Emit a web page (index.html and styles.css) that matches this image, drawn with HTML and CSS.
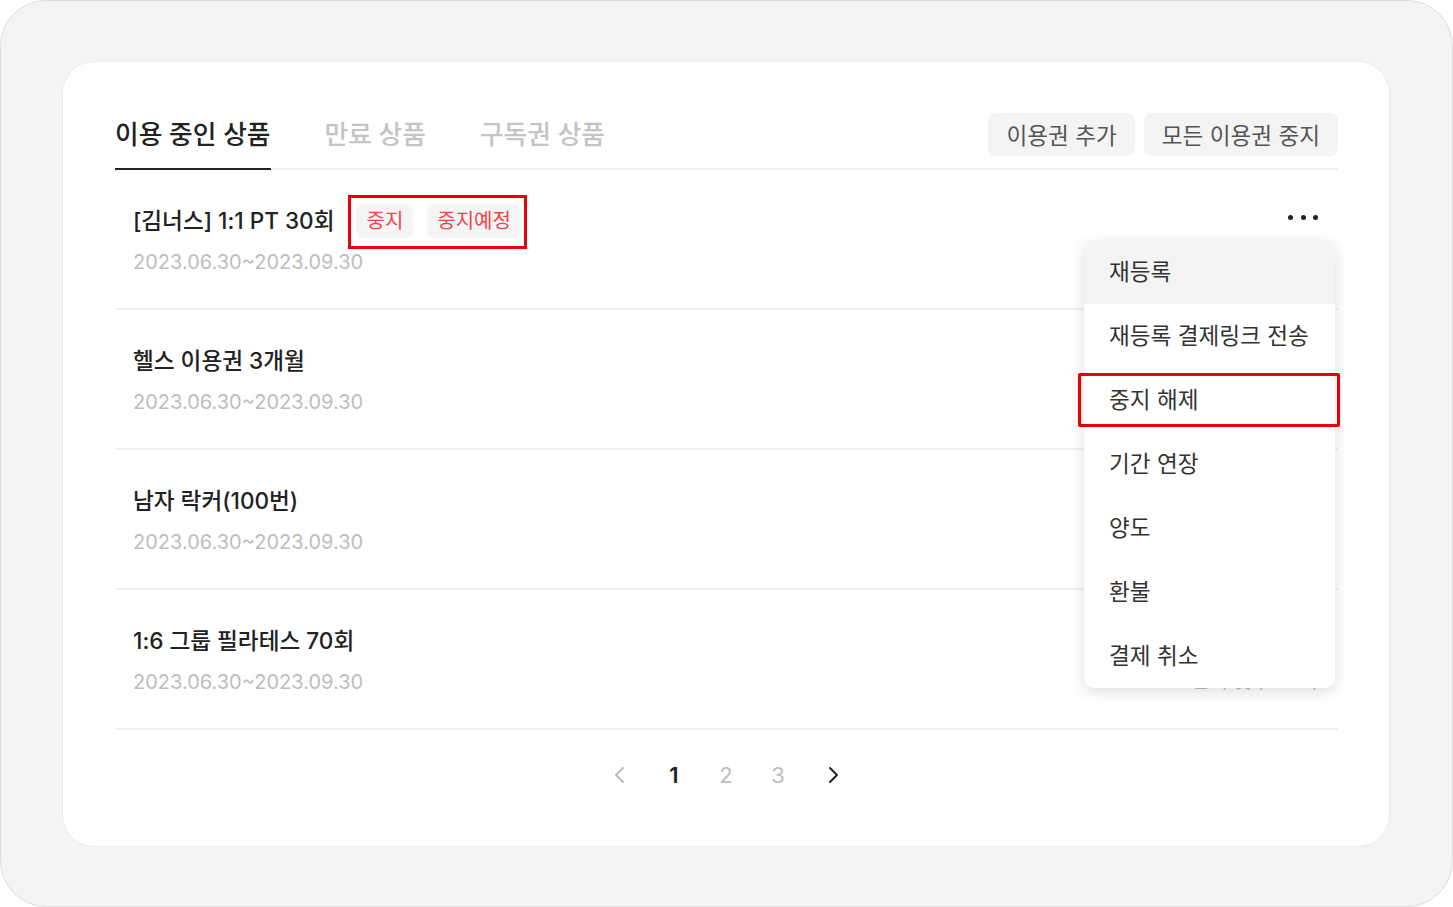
FILE: index.html
```html
<!DOCTYPE html>
<html lang="ko">
<head>
<meta charset="utf-8">
<title>이용 중인 상품</title>
<link rel="stylesheet" href="styles.css">
</head>
<body>
<div class="frame">
  <div class="card">
    <div class="header">
      <div class="tabs">
        <div class="tab active">이용 중인 상품</div>
        <div class="tab">만료 상품</div>
        <div class="tab">구독권 상품</div>
      </div>
      <div class="actions">
        <button class="btn">이용권 추가</button>
        <button class="btn">모든 이용권 중지</button>
      </div>
    </div>

    <div class="row">
      <div class="row-main">
        <div class="title-line">
          <span class="title">[김너스] 1:1 PT 30회</span>
          <span class="badge-group">
            <span class="badge">중지</span>
            <span class="badge">중지예정</span>
          </span>
        </div>
        <div class="date">2023.06.30~2023.09.30</div>
      </div>
      <div class="row-side">
        <div class="more"><span></span><span></span><span></span></div>
        <div class="side-text">남은 기간 92일</div>
      </div>
    </div>

    <div class="row">
      <div class="row-main">
        <div class="title-line"><span class="title">헬스 이용권 3개월</span></div>
        <div class="date">2023.06.30~2023.09.30</div>
      </div>
      <div class="row-side">
        <div class="more"><span></span><span></span><span></span></div>
        <div class="side-text">남은 기간 92일</div>
      </div>
    </div>

    <div class="row">
      <div class="row-main">
        <div class="title-line"><span class="title">남자 락커(100번)</span></div>
        <div class="date">2023.06.30~2023.09.30</div>
      </div>
      <div class="row-side">
        <div class="more"><span></span><span></span><span></span></div>
        <div class="side-text">남은 기간 92일</div>
      </div>
    </div>

    <div class="row">
      <div class="row-main">
        <div class="title-line"><span class="title">1:6 그룹 필라테스 70회</span></div>
        <div class="date">2023.06.30~2023.09.30</div>
      </div>
      <div class="row-side">
        <div class="more"><span></span><span></span><span></span></div>
        <div class="side-text">잔여 횟수 70회</div>
      </div>
    </div>

    <div class="pager">
      <span class="pg-arrow prev">
        <svg width="14" height="18" viewBox="0 0 14 18"><polyline points="10,2 3,9 10,16" fill="none" stroke="#bdbdbd" stroke-width="2" stroke-linecap="round" stroke-linejoin="round"/></svg>
      </span>
      <span class="pg-num current">1</span>
      <span class="pg-num">2</span>
      <span class="pg-num">3</span>
      <span class="pg-arrow next">
        <svg width="14" height="18" viewBox="0 0 14 18"><polyline points="4,2 11,9 4,16" fill="none" stroke="#222" stroke-width="2" stroke-linecap="round" stroke-linejoin="round"/></svg>
      </span>
    </div>

    <ul class="menu">
      <li class="menu-item hover">재등록</li>
      <li class="menu-item">재등록 결제링크 전송</li>
      <li class="menu-item marked">중지 해제</li>
      <li class="menu-item">기간 연장</li>
      <li class="menu-item">양도</li>
      <li class="menu-item">환불</li>
      <li class="menu-item">결제 취소</li>
    </ul>
  </div>
</div>
</body>
</html>
```

FILE: styles.css
```css
* { box-sizing: border-box; }

html, body {
  margin: 0;
  padding: 0;
  background: #ffffff;
}

body {
  font-family: "Inter", "Noto Sans CJK KR", "Noto Sans", sans-serif;
  color: #222222;
}

.frame {
  width: 1453px;
  height: 907px;
  background: #f4f4f4;
  border: 1px solid #dedede;
  border-radius: 46px;
  padding: 60px 0 0 61px;
}

.card {
  position: relative;
  width: 1328px;
  height: 786px;
  background: #ffffff;
  border: 1px solid #ebebeb;
  border-radius: 32px;
  padding: 51px 51px 0 52px;
}

/* header */
.header {
  display: flex;
  justify-content: space-between;
  align-items: flex-start;
  border-bottom: 2px solid #f0f0f0;
}

.tabs {
  display: flex;
  gap: 54px;
}

.tab {
  font-size: 25.7px;
  line-height: 43px;
  font-weight: 500;
  padding-bottom: 12px;
  color: #c4c4c4;
  border-bottom: 2px solid transparent;
  margin-bottom: -2px;
}

.tab.active {
  color: #222222;
  border-bottom-color: #222222;
}

.actions {
  display: flex;
  gap: 9px;
}

.btn {
  font-family: inherit;
  font-size: 22.6px;
  height: 43px;
  padding: 0 18px;
  border: none;
  border-radius: 8px;
  background: #f4f4f4;
  color: #555555;
}

/* rows */
.row {
  display: flex;
  justify-content: space-between;
  padding: 35px 20px 32px 18px;
  border-bottom: 2px solid #f0f0f0;
}

.title-line {
  display: flex;
  align-items: center;
  height: 32px;
  gap: 14px;
}

.title {
  font-size: 22.6px;
  line-height: 30px;
  font-weight: 500;
  color: #222222;
}

.date {
  margin-top: 11px;
  font-size: 20px;
  line-height: 28px;
  color: #bdbdbd;
}

.badge-group {
  display: flex;
  gap: 14px;
  border: 3px solid #e8000b;
  padding: 6px 3px 8px 5px;
  margin: -10px 0 -12px;
}

.badge {
  font-size: 20px;
  line-height: 34px;
  height: 34px;
  padding: 0 10px;
  border-radius: 7px;
  background: #f5f5f5;
  color: #f2444b;
}

.row-side {
  display: flex;
  flex-direction: column;
  align-items: flex-end;
}

.more {
  display: flex;
  gap: 7.5px;
  height: 32px;
  align-items: center;
  margin-top: -4px;
}

.more span {
  width: 5px;
  height: 5px;
  border-radius: 50%;
  background: #222222;
}

.side-text {
  margin-top: 14px;
  font-size: 20px;
  line-height: 28px;
  color: #bdbdbd;
}

/* pager */
.pager {
  display: flex;
  justify-content: center;
  align-items: center;
  gap: 24px;
  margin-top: 30px;
  height: 30px;
}

.pg-num,
.pg-arrow {
  width: 28px;
  display: flex;
  justify-content: center;
  font-size: 22px;
  line-height: 30px;
  color: #bdbdbd;
}

.pg-arrow.prev { margin-right: 2px; }
.pg-arrow.next { margin-left: 3px; }

.pg-num.current {
  color: #222222;
  font-weight: 600;
}

/* dropdown menu */
.menu {
  position: absolute;
  left: 1021px;
  top: 178px;
  width: 251px;
  margin: 0;
  padding: 0;
  list-style: none;
  background: #ffffff;
  border-radius: 10px;
  box-shadow: 0 4px 14px rgba(0, 0, 0, 0.13);
}

.menu-item {
  position: relative;
  height: 64px;
  padding: 0 25px;
  font-size: 22.6px;
  line-height: 64px;
  color: #333333;
}

.menu-item.hover {
  background: #f4f4f4;
  border-radius: 10px 10px 0 0;
}

.menu-item.marked::after {
  content: "";
  position: absolute;
  top: 5px;
  bottom: 5px;
  left: -6px;
  right: -5px;
  border: 3px solid #e8000b;
  border-radius: 2px;
}
```
